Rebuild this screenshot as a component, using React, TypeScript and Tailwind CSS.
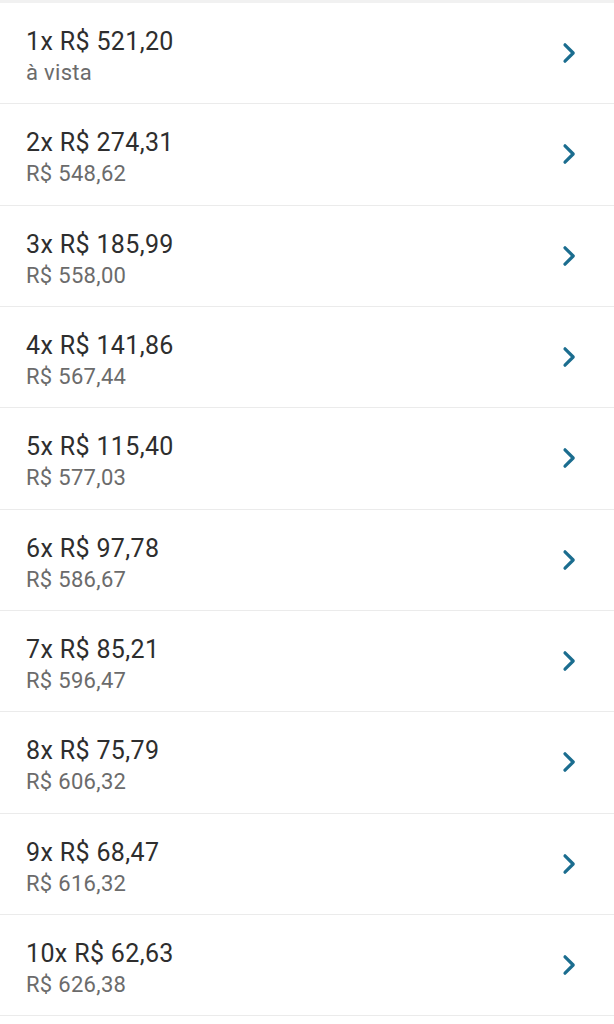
import React from 'react';

// Parcelas
const parcelas = [
    { qtd: '1x', valor: 'R$ 521,20', total: 'à vista' },
    { qtd: '2x', valor: 'R$ 274,31', total: 'R$ 548,62' },
    { qtd: '3x', valor: 'R$ 185,99', total: 'R$ 558,00' },
    { qtd: '4x', valor: 'R$ 141,86', total: 'R$ 567,44' },
    { qtd: '5x', valor: 'R$ 115,40', total: 'R$ 577,03' },
    { qtd: '6x', valor: 'R$ 97,78', total: 'R$ 586,67' },
    { qtd: '7x', valor: 'R$ 85,21', total: 'R$ 596,47' },
    { qtd: '8x', valor: 'R$ 75,79', total: 'R$ 606,32' },
    { qtd: '9x', valor: 'R$ 68,47', total: 'R$ 616,32' },
    { qtd: '10x', valor: 'R$ 62,63', total: 'R$ 626,38' },
];

const Chevron = () => (
    <svg width="16" height="22" viewBox="0 0 16 22" fill="none">
        <path d="M4 2.8 L12.2 11 L4 19.2" stroke="#1b6d8f" strokeWidth="3.2" strokeLinecap="round" strokeLinejoin="round" />
    </svg>
);

export default function App() {
    return (
        <div className="min-h-[1024px] bg-white font-['Roboto',sans-serif]">
            <div className="h-[3px] bg-[#f1f1f1]" />
            {parcelas.map((p) => (
                <button
                    key={p.qtd}
                    type="button"
                    className="flex h-[101.33px] w-full items-center justify-between border-b-[1.5px] border-[#ebebeb] pl-[26px] pr-[37px] text-left"
                >
                    <div className="mt-[7px] flex flex-col">
                        <span className="text-[25px] leading-[30px] tracking-[0.35px] text-[#2e2e2e]">
                            {p.qtd} {p.valor}
                        </span>
                        <span className="mt-[3px] text-[22px] leading-[26px] tracking-[0.3px] text-[#6b6b6b]">{p.total}</span>
                    </div>
                    <Chevron />
                </button>
            ))}
        </div>
    );
}
